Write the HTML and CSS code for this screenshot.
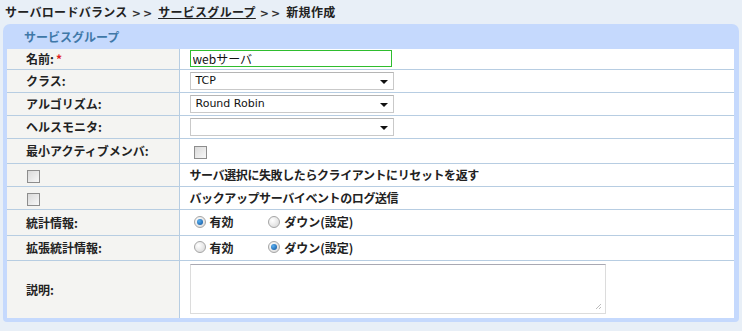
FILE: index.html
```html
<!DOCTYPE html>
<html lang="ja">
<head>
    <meta charset="UTF-8">
    <title>サービスグループ 新規作成</title>
    <link rel="stylesheet" href="styles.css">
</head>
<body>
    <div class="crumbs">
        サーバロードバランス <span class="sep">&gt;&gt;</span> <a href="#">サービスグループ</a> <span class="sep">&gt;&gt;</span> 新規作成
    </div>

    <div class="panel">
        <div class="panel-title">サービスグループ</div>
        <table class="form">
            <tr class="r-name">
                <th>名前:<span class="req">*</span></th>
                <td><input class="text" type="text" value="webサーバ"></td>
            </tr>
            <tr>
                <th>クラス:</th>
                <td><div class="select"><span>TCP</span></div></td>
            </tr>
            <tr>
                <th>アルゴリズム:</th>
                <td><div class="select"><span>Round Robin</span></div></td>
            </tr>
            <tr>
                <th>ヘルスモニタ:</th>
                <td><div class="select"><span></span></div></td>
            </tr>
            <tr class="r-tall">
                <th>最小アクティブメンバ:</th>
                <td><span class="check"></span></td>
            </tr>
            <tr>
                <th><span class="check"></span></th>
                <td class="plain">サーバ選択に失敗したらクライアントにリセットを返す</td>
            </tr>
            <tr>
                <th><span class="check"></span></th>
                <td class="plain">バックアップサーバイベントのログ送信</td>
            </tr>
            <tr class="r-radio">
                <th>統計情報:</th>
                <td>
                    <label class="opt"><span class="radio on"></span>有効</label>
                    <label class="opt"><span class="radio"></span>ダウン(設定)</label>
                </td>
            </tr>
            <tr class="r-radio2">
                <th>拡張統計情報:</th>
                <td>
                    <label class="opt"><span class="radio"></span>有効</label>
                    <label class="opt"><span class="radio on"></span>ダウン(設定)</label>
                </td>
            </tr>
            <tr class="r-desc">
                <th>説明:</th>
                <td><div class="area"><span class="grip"></span></div></td>
            </tr>
        </table>
    </div>
</body>
</html>
```

FILE: styles.css
```css
body { margin: 0; background: #e8eff7; font-family: "Noto Sans CJK JP", "DejaVu Sans", sans-serif; font-size: 12px; color: #222; }

.crumbs { height: 24px; line-height: 24px; padding-left: 5px; font-weight: bold; color: #222; font-size: 12px; letter-spacing: 0.3px; }
.crumbs a { color: #222; text-decoration: underline; }
.crumbs .sep { color: #333; font-family: "DejaVu Sans", sans-serif; font-size: 11px; letter-spacing: 2px; margin: 0 1px; }

.panel { margin: 0 3px 0 3px; background: #c5d9fd; border-radius: 7px 7px 4px 4px; padding: 0 5px 4px 4px; }
.panel-title { height: 25px; line-height: 25px; padding-left: 17px; color: #3f78a8; font-weight: bold; font-size: 12px; }

.form { width: 100%; border-collapse: collapse; background: #fff; }
.form th, .form td { border-bottom: 1px solid #b7cde2; height: 23px; padding: 0; vertical-align: middle; box-sizing: border-box; }
.form th { width: 172px; background: #f4f4f2; border-right: 1px solid #b7cde2; text-align: left; padding-left: 19px; font-weight: bold; color: #222; }
.form td { padding-left: 10px; }
.form td.plain { font-weight: bold; color: #222; padding-left: 10px; letter-spacing: -0.4px; }
.form tr.r-name th, .form tr.r-name td { height: 20px; }
.form tr.r-tall th, .form tr.r-tall td { height: 25px; }
.form tr.r-radio th, .form tr.r-radio td { height: 26px; }
.form tr.r-radio2 th, .form tr.r-radio2 td { height: 25px; }
.form tr.r-desc th, .form tr.r-desc td { height: 58px; }
.form tr:last-child th, .form tr:last-child td { border-bottom: none; }
.req { color: #e02020; margin-left: 2px; }

.text { display: block; width: 196px; height: 13px; border: 1px solid #2ebd2e; padding: 1px 2px; font: 12px "Noto Sans CJK JP", "DejaVu Sans", sans-serif; color: #111; outline: none; }

.select { position: relative; width: 202px; height: 16px; border: 1px solid #c9c9c9; border-top-color: #b5b5b5; background: #fff; }
.select span { display: block; line-height: 16px; padding-left: 5px; font-family: "DejaVu Sans", sans-serif; font-size: 11px; color: #111; }
.select::after { content: ""; position: absolute; right: 5px; top: 7px; border-left: 4px solid transparent; border-right: 4px solid transparent; border-top: 4px solid #111; }

.check { display: inline-block; width: 11px; height: 11px; border: 1px solid #8d8d8d; background: linear-gradient(135deg, #d9d9d9, #f8f8f8); vertical-align: middle; }
.form td .check { margin-left: 4px; }
.form th .check { margin-left: 1px; }

.opt { display: inline-flex; align-items: center; font-weight: bold; margin-left: 4px; }
.opt + .opt { margin-left: 32px; }
.radio { position: relative; display: inline-block; width: 10px; height: 10px; border: 1px solid #a6a6a6; border-radius: 50%; background: radial-gradient(circle at 35% 35%, #fff, #d4d4d4); margin-right: 4px; }
.radio.on::after { content: ""; position: absolute; left: 2px; top: 2px; width: 6px; height: 6px; border-radius: 50%; background: radial-gradient(circle at 35% 35%, #5ab0f0, #0b4f9a); }

.area { position: relative; width: 414px; height: 48px; border: 1px solid #dcdcdc; border-top-color: #a9a9b3; background: #fff; }
.grip { position: absolute; right: 4px; bottom: 4px; width: 6px; height: 6px; background: linear-gradient(135deg, transparent 50%, #bdbdbd 50%, #bdbdbd 60%, transparent 60%, transparent 75%, #bdbdbd 75%, #bdbdbd 85%, transparent 85%); }
```
